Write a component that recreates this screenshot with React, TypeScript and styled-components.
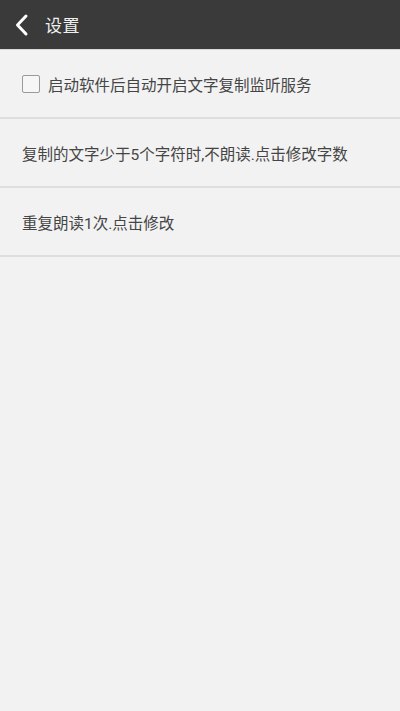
import React from "react";
import styled, { createGlobalStyle } from "styled-components";

const Global = createGlobalStyle`
  html, body { margin: 0; padding: 0; background: #f2f2f2; }
  body { font-family: Roboto, "Noto Sans CJK SC", sans-serif; }
`;

const Page = styled.div`
  width: 400px;
  min-height: 711px;
  background: #f2f2f2;
  display: flex;
  flex-direction: column;
`;

const Toolbar = styled.header`
  height: 49px;
  background: #3a3a3a;
  display: flex;
  align-items: center;
  padding-left: 14px;
  gap: 15px;
  border-bottom: 1px solid #d8d8d8;
`;

const Title = styled.h1`
  margin: 0;
  font-size: 17px;
  font-weight: 400;
  color: #f0f0f0;
  letter-spacing: 0.5px;
`;

const Row = styled.div<{ $h: number }>`
  height: ${(p) => p.$h}px;
  display: flex;
  align-items: center;
  padding-left: 22px;
  gap: 8px;
  border-bottom: 2px solid #dedede;
  font-size: 15.5px;
  color: #454545;
`;

const Box = styled.span`
  box-sizing: border-box;
  width: 18px;
  height: 18px;
  border: 1.5px solid #9a9a9a;
  border-radius: 2px;
  background: #f6f6f6;
`;

export default function App() {
  return (
    <Page>
      <Global />
      <Toolbar>
        <svg width="16" height="24" viewBox="0 0 16 24">
          <path d="M12 3 L3.5 12 L12 21" stroke="#fff" strokeWidth="3" fill="none" strokeLinecap="round" strokeLinejoin="round" />
        </svg>
        <Title>设置</Title>
      </Toolbar>
      <Row $h={67}>
        <Box />
        <span>启动软件后自动开启文字复制监听服务</span>
      </Row>
      <Row $h={67}>复制的文字少于5个字符时,不朗读.点击修改字数</Row>
      <Row $h={67}>重复朗读1次.点击修改</Row>
    </Page>
  );
}
